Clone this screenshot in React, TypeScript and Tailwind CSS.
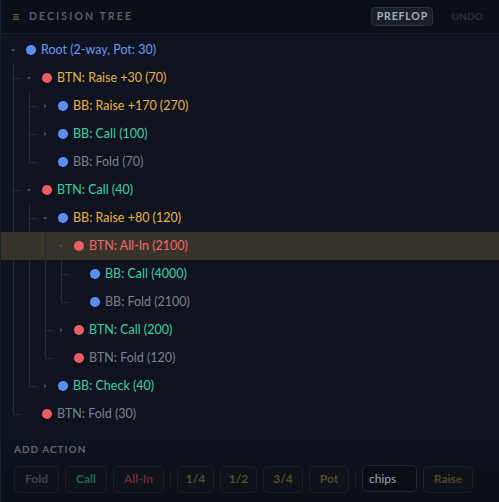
import React from "react";

type Node = {
  label: string;
  dot: "blue" | "red";
  tone: "blue" | "amber" | "green" | "gray" | "red";
  open?: boolean;
  selected?: boolean;
  children?: Node[];
};

const tree: Node = {
  label: "Root (2-way, Pot: 30)",
  dot: "blue",
  tone: "blue",
  open: true,
  children: [
    {
      label: "BTN: Raise +30 (70)",
      dot: "red",
      tone: "amber",
      open: true,
      children: [
        { label: "BB: Raise +170 (270)", dot: "blue", tone: "amber", children: [] },
        { label: "BB: Call (100)", dot: "blue", tone: "green", children: [] },
        { label: "BB: Fold (70)", dot: "blue", tone: "gray" },
      ],
    },
    {
      label: "BTN: Call (40)",
      dot: "red",
      tone: "green",
      open: true,
      children: [
        {
          label: "BB: Raise +80 (120)",
          dot: "blue",
          tone: "amber",
          open: true,
          children: [
            {
              label: "BTN: All-In (2100)",
              dot: "red",
              tone: "red",
              open: true,
              selected: true,
              children: [
                { label: "BB: Call (4000)", dot: "blue", tone: "green" },
                { label: "BB: Fold (2100)", dot: "blue", tone: "gray" },
              ],
            },
            { label: "BTN: Call (200)", dot: "red", tone: "green", children: [] },
            { label: "BTN: Fold (120)", dot: "red", tone: "gray" },
          ],
        },
        { label: "BB: Check (40)", dot: "blue", tone: "green", children: [] },
      ],
    },
    { label: "BTN: Fold (30)", dot: "red", tone: "gray" },
  ],
};

const padByDepth = ["pl-[6px]", "pl-[22px]", "pl-[38px]", "pl-[54px]", "pl-[70px]"];
const lineByDepth = ["left-[12px]", "left-[12px]", "left-[28px]", "left-[44px]", "left-[60px]"];

const toneClass = {
  blue: "text-[#6a9cf6]",
  amber: "text-[#e9b73f]",
  green: "text-[#34d3a3]",
  gray: "text-[#7b818c]",
  red: "text-[#f0696b]",
};

const dotClass = {
  blue: "bg-[#5d8ff2]",
  red: "bg-[#ee5d5f]",
};

function Chevron({ open }: { open: boolean }) {
  return (
    <svg viewBox="0 0 6 6" className="h-[6px] w-[6px] text-[#4b5361]">
      {open ? <polygon points="1,2 5,2 3,4.5" fill="currentColor" /> : <polygon points="2,1 4.5,3 2,5" fill="currentColor" />}
    </svg>
  );
}

function TreeNode({ node, depth, last }: { node: Node; depth: number; last: boolean }) {
  const hasKids = node.children !== undefined && node.children.length > 0;
  const expandable = node.children !== undefined;
  return (
    <div className="relative">
      {depth > 0 && (
        <>
          <span className={`absolute top-0 w-px bg-[#262d3a] ${lineByDepth[depth]} ${last ? "h-[14px]" : "h-full"}`} />
          <span className={`absolute top-[14px] h-px w-[8px] bg-[#262d3a] ${lineByDepth[depth]}`} />
        </>
      )}
      <div className={`flex h-[28px] items-center ${padByDepth[depth]} ${node.selected ? "bg-[#38342b]" : ""}`}>
        <span className="flex w-[12px] justify-center">{expandable && <Chevron open={!!node.open} />}</span>
        <span className={`ml-[7px] h-[10px] w-[10px] shrink-0 rounded-full ${dotClass[node.dot]}`} />
        <span className={`ml-[5px] text-[12.5px] ${toneClass[node.tone]}`}>{node.label}</span>
      </div>
      {hasKids && node.open && (
        <div>
          {node.children!.map((c, i) => (
            <TreeNode key={c.label} node={c} depth={depth + 1} last={i === node.children!.length - 1} />
          ))}
        </div>
      )}
    </div>
  );
}

function ActionButton({ children, tone }: { children: React.ReactNode; tone: string }) {
  return (
    <button
      className={`h-[27px] w-full rounded-[5px] border border-[#1b212b] bg-[#0f141d]/60 text-[12px] font-bold ${tone}`}
    >
      {children}
    </button>
  );
}

export default function App() {
  return (
    <div
      className="flex h-[502px] w-[499px] flex-col border-l border-[#172033] bg-[#0e131f]"
      style={{ fontFamily: "Lato, 'Noto Sans', sans-serif" }}
    >
      {/* Header */}
      <div className="flex h-[34px] shrink-0 items-center border-b border-[#161c27] bg-[#0b0f17] pl-[12px] pr-[16px]">
        <svg viewBox="0 0 6 6" className="h-[6px] w-[6px]">
          <rect x="0" y="0" width="6" height="1.2" fill="#6e5b2e" />
          <rect x="0" y="2.4" width="6" height="1.2" fill="#6e5b2e" />
          <rect x="0" y="4.8" width="6" height="1.2" fill="#6e5b2e" />
        </svg>
        <span className="ml-[10px] text-[10.5px] font-bold tracking-[0.2em] text-[#565e6b]">DECISION TREE</span>
        <div className="ml-auto flex items-center gap-[18px]">
          <button className="h-[19px] w-[62px] rounded-[4px] border border-[#2a313d] bg-[#1a1f29] text-[10.5px] font-bold tracking-[0.08em] text-[#a8b0bc]">
            PREFLOP
          </button>
          <span className="text-[10px] font-bold tracking-[0.02em] text-[#2b323e]">UNDO</span>
        </div>
      </div>

      {/* Tree */}
      <div className="pt-[2px] pb-[5px]">
        <TreeNode node={tree} depth={0} last />
      </div>

      {/* Add action */}
      <div className="flex flex-1 flex-col bg-gradient-to-b from-[#0e131f] to-[#0b0f17] px-[13px] pt-[9px]">
        <span className="text-[10px] font-bold leading-[14px] tracking-[0.1em] text-[#5f6775]">ADD ACTION</span>
        <div className="mt-[9px] flex items-center gap-[6px]">
          <div className="w-[45px]"><ActionButton tone="text-[#3b4350]">Fold</ActionButton></div>
          <div className="w-[42px]"><ActionButton tone="text-[#1f6a55]">Call</ActionButton></div>
          <div className="w-[51px]"><ActionButton tone="text-[#6c2b35]">All-In</ActionButton></div>
          <span className="h-[16px] w-px bg-[#1d232d]" />
          <div className="w-[37px]"><ActionButton tone="text-[#5c4b24]">1/4</ActionButton></div>
          <div className="w-[37px]"><ActionButton tone="text-[#5c4b24]">1/2</ActionButton></div>
          <div className="w-[40px]"><ActionButton tone="text-[#5c4b24]">3/4</ActionButton></div>
          <div className="w-[40px]"><ActionButton tone="text-[#5c4b24]">Pot</ActionButton></div>
          <span className="h-[16px] w-px bg-[#1d232d]" />
          <input
            defaultValue="chips"
            className="h-[27px] w-[55px] rounded-[5px] border border-[#212834] bg-[#0a0d14] px-[6px] text-[12px] text-[#9ea7b4] outline-none"
          />
          <div className="w-[50px]"><ActionButton tone="text-[#4f4225]">Raise</ActionButton></div>
        </div>
      </div>
    </div>
  );
}
